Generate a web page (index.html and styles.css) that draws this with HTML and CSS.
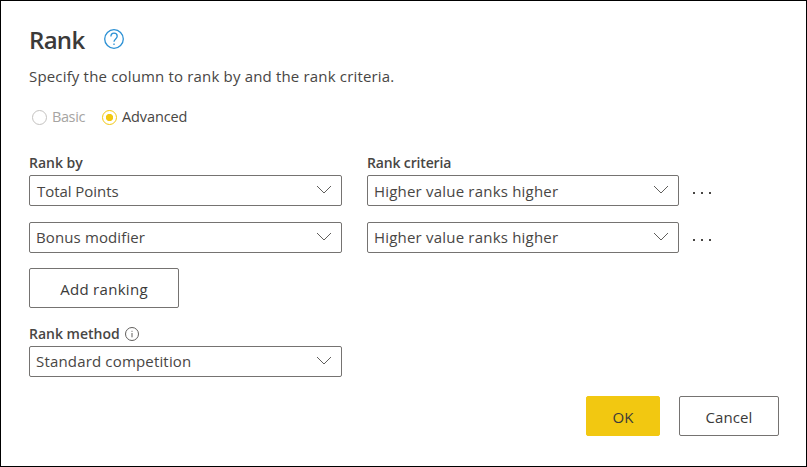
FILE: index.html
```html
<!DOCTYPE html>
<html lang="en">
<head>
<meta charset="utf-8">
<title>Rank</title>
<link rel="stylesheet" href="styles.css">
</head>
<body>
<main class="dialog">
  <header class="header">
    <h1 class="title">Rank</h1>
    <svg class="help" viewBox="0 0 20 20" fill="none"><circle cx="10" cy="10" r="9.3"/><path d="M6.9 7.6C6.9 5.3 8.2 4.2 10 4.2s3.2 1.2 3.2 3c0 2.7-3.2 2.7-3.2 5.6M10 14.4v1.5"/></svg>
  </header>
  <p class="description">Specify the column to rank by and the rank criteria.</p>
  <div class="modes">
    <div class="mode mode-off"><span class="radio"></span><span class="basic">Basic</span></div>
    <div class="mode"><span class="radio radio-on"></span><span>Advanced</span></div>
  </div>
  <section class="rankings">
    <div class="label">Rank by</div>
    <div class="label criteria-label">Rank criteria</div>
    <div></div>
    <div class="select first"><span class="total">Total Points</span><svg class="chevron" viewBox="0 0 16 10"><path d="M1 1l7 7 7-7"/></svg></div>
    <div class="select first"><span class="higher">Higher value ranks higher</span><svg class="chevron" viewBox="0 0 16 10"><path d="M1 1l7 7 7-7"/></svg></div>
    <div class="more"><i></i><i></i><i></i></div>
    <div class="select second"><span class="bonus">Bonus modifier</span><svg class="chevron" viewBox="0 0 16 10"><path d="M1 1l7 7 7-7"/></svg></div>
    <div class="select second"><span class="higher">Higher value ranks higher</span><svg class="chevron" viewBox="0 0 16 10"><path d="M1 1l7 7 7-7"/></svg></div>
    <div class="more second"><i></i><i></i><i></i></div>
  </section>
  <button class="button add">Add ranking</button>
  <section class="method">
    <div class="label method-label">Rank method<svg class="info" viewBox="0 0 14 14" fill="none"><circle cx="7" cy="7" r="6.5"/><path d="M7 6v4.3M7 3.8v1"/></svg></div>
    <div class="select"><span class="standard">Standard competition</span><svg class="chevron" viewBox="0 0 16 10"><path d="M1 1l7 7 7-7"/></svg></div>
  </section>
  <footer class="footer">
    <button class="button ok">OK</button>
    <button class="button cancel">Cancel</button>
  </footer>
</main>
</body>
</html>
```
FILE: styles.css
```css
* { box-sizing: border-box; }
body {
  margin: 0;
  background: #fff;
  color: #484644;
  font-family: "Open Sans", "Noto Sans", sans-serif;
  font-size: 15px;
}
.dialog {
  width: 807px;
  height: 467px;
  border: 1px solid #000;
  padding: 22px 27px 0 28px;
}
.header { display: flex; height: 32px; gap: 18px; }
.title { margin: 0; font-size: 24px; line-height: 34px; font-weight: 600; letter-spacing: -0.7px; width: 57px; color: #3b3a39; white-space: nowrap; }
.help { width: 20px; height: 20px; margin-top: 6px; stroke: #2b90d4; stroke-width: 1.3; }
.description { margin: 10px 0 0; height: 22px; line-height: 22px; letter-spacing: 0.17px; white-space: nowrap; }
.modes { display: flex; gap: 17px; height: 20px; margin: 20px 0 0 3px; font-size: 14.5px; letter-spacing: -0.1px; }
.mode { display: flex; align-items: center; gap: 5px; line-height: 20px; }
.mode-off { color: #a6a4a2; width: 53px; letter-spacing: -0.4px; }
.radio { width: 15px; height: 15px; flex: none; border: 1px solid #c4c2c0; border-radius: 50%; }
.radio-on { border: 1.3px solid #f2c811; background: radial-gradient(circle, #f2c811 3.3px, transparent 4px); }
.rankings { display: grid; grid-template-columns: 313px 312px 22px; column-gap: 25px; margin-top: 26px; }
.label { height: 22px; line-height: 20px; font-size: 14px; font-weight: 600; white-space: nowrap; }
.criteria-label { letter-spacing: -0.15px; }
.select {
  display: flex;
  align-items: center;
  justify-content: space-between;
  height: 31px;
  border: 1px solid #757371;
  border-radius: 2px;
  padding: 0 9px 0 7px;
  line-height: 29px;
  white-space: nowrap;
}
.first span { padding-top: 2px; }
.total { letter-spacing: -0.05px; }
.higher { margin-left: -1px; letter-spacing: 0.2px; }
.standard { margin-left: -1px; letter-spacing: 0.17px; }
.bonus { margin-left: -1px; letter-spacing: 0.12px; }
.second { margin-top: 16px; }
.chevron { width: 16px; height: 10px; margin-top: -2px; fill: none; stroke: #605e5c; stroke-width: 1; }
.more { display: flex; align-items: center; gap: 6px; margin-left: -11px; padding-top: 4px; }
.more i { width: 2px; height: 2px; background: #484644; }
.button {
  height: 40px;
  padding: 2px 0 0;
  border: 1px solid #757371;
  border-radius: 2px;
  background: #fff;
  color: #3b3a39;
  font-family: inherit;
  font-size: 15px;
}
.add { display: block; width: 150px; margin-top: 15px; letter-spacing: 0.3px; }
.method { width: 313px; margin-top: 16px; }
.method-label { display: flex; gap: 5px; }
.info { width: 14px; height: 14px; margin-top: 3px; stroke: #605e5c; stroke-width: 1; }
.footer { display: flex; justify-content: flex-end; gap: 19px; margin-top: 19px; }
.ok { width: 74px; border-color: #f2c811; background: #f2c811; }
.cancel { width: 100px; letter-spacing: 0.1px; }
```
